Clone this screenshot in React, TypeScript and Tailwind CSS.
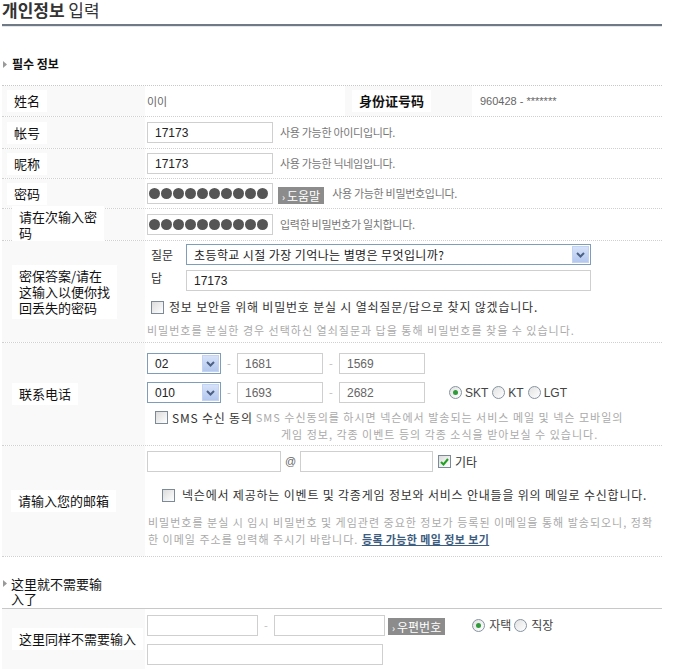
import React from "react";

const KR = "font-['Noto_Sans_CJK_KR',sans-serif]";
const SC = "font-['Noto_Sans_CJK_SC',sans-serif]";
const LAT = "font-['Liberation_Sans',sans-serif]";

function Label({ children, pl = "pl-[5px]", w = "w-[143px]", bold }: { children: React.ReactNode; pl?: string; w?: string; bold?: boolean }) {
  return (
    <div className={`${w} shrink-0 self-stretch flex items-center bg-[#f9f9f9] ${pl}`}>
      <span className={`bg-white px-[7px] py-[3px] text-[13px] leading-[16px] text-[#111] ${bold ? "font-semibold" : ""} ${SC}`}>{children}</span>
    </div>
  );
}

function TextBox({ w, value, dim }: { w: string; value?: string; dim?: boolean }) {
  return (
    <div className={`${w} h-[21px] shrink-0 border border-[#cfcfcf] bg-white flex items-center px-[7px] text-[12px] ${dim ? "text-[#666]" : "text-[#222]"} ${LAT}`}>
      {value}
    </div>
  );
}

function PasswordBox() {
  return (
    <div className="w-[126px] h-[21px] shrink-0 border border-[#cfcfcf] bg-white flex items-center gap-[1px] pl-[1px]">
      {Array.from({ length: 10 }).map((_, i) => (
        <span key={i} className="w-[11px] h-[11px] rounded-full bg-[#555]" />
      ))}
    </div>
  );
}

function SelectBox({ w, value, kr }: { w: string; value: string; kr?: boolean }) {
  return (
    <div className={`${w} h-[21px] shrink-0 border border-[#7f9db9] bg-white flex items-center justify-between pl-[7px] pr-[1px]`}>
      <span className={`text-[12px] text-[#222] ${kr ? `${KR} tracking-[0.4px]` : LAT}`}>{value}</span>
      <span className="w-[17px] h-[17px] bg-gradient-to-b from-[#d6e2f8] to-[#b4c8ee] border border-[#c3d3f3] flex items-center justify-center">
        <svg width="9" height="6" viewBox="0 0 9 6">
          <path d="M1 1l3.5 3.5L8 1" fill="none" stroke="#4d6185" strokeWidth="2" />
        </svg>
      </span>
    </div>
  );
}

function GrayButton({ children }: { children: React.ReactNode }) {
  return (
    <span className={`h-[18px] shrink-0 bg-[#8c8c8c] text-white text-[12px] leading-[18px] px-[4px] ${KR}`}>
      <span className="text-[10px] mr-[2px]">›</span>
      {children}
    </span>
  );
}

function Radio({ on }: { on?: boolean }) {
  return (
    <span className="w-[13px] h-[13px] shrink-0 rounded-full border border-[#8594a2] bg-gradient-to-br from-[#e2e2e2] to-white flex items-center justify-center">
      {on && <span className="w-[5px] h-[5px] rounded-full bg-[#2f9a3c]" />}
    </span>
  );
}

function Check({ on }: { on?: boolean }) {
  return (
    <span className="w-[13px] h-[13px] shrink-0 border border-[#7c8a98] bg-gradient-to-br from-[#dcdcdc] to-white flex items-center justify-center">
      {on && (
        <svg width="9" height="8" viewBox="0 0 9 8">
          <path d="M1 4l2.5 2.5L8 1" fill="none" stroke="#21a121" strokeWidth="2" />
        </svg>
      )}
    </span>
  );
}

function Dash() {
  return <span className="w-[16px] shrink-0 text-center text-[11px] text-[#bbb]">-</span>;
}

function Arrow() {
  return (
    <svg width="4" height="7" viewBox="0 0 4 7" className="shrink-0">
      <path d="M0 0l4 3.5L0 7z" fill="#9a9a9a" />
    </svg>
  );
}

const row = "flex border-b border-dotted border-[#d0d0d0]";
const note = `text-[11px] tracking-[-0.3px] text-[#777] ${KR}`;
const hint = `text-[11px] tracking-[1px] text-[#aaa] ${KR}`;
const body = `text-[12px] tracking-[0.8px] text-[#333] ${KR}`;

export default function App() {
  return (
    <div className={`w-[685px] h-[669px] bg-white overflow-hidden ${KR}`}>
      <div className="ml-[2px] w-[660px]">
        <h1 className="h-[24px] text-[17px] leading-[20px] text-[#333]">
          <span className="font-bold">개인정보</span> 입력
        </h1>
        <div className="h-[2px] bg-[#6f7a86]" />
        <div className="h-[1px] bg-[#e3e6ea]" />

        <div className="h-[59px] pt-[30px] flex items-start gap-[5px] pl-[1px] border-b border-dotted border-[#c8c8c8]">
          <span className="mt-[4px]"><Arrow /></span>
          <span className="text-[12px] leading-[14px] font-bold text-[#111]">필수 정보</span>
        </div>

        {/* 기본 정보 */}
        <div className={`${row} h-[31px]`}>
          <Label>姓名</Label>
          <div className="w-[200px] flex items-center pl-[2px] text-[11px] text-[#666]">이이</div>
          <Label w="w-[127px]" pl="pl-[7px]" bold>身份证号码</Label>
          <div className={`flex items-center pl-[8px] text-[11px] text-[#666] ${LAT}`}>960428 - *******</div>
        </div>

        <div className={`${row} h-[32px]`}>
          <Label>帐号</Label>
          <div className="flex items-center gap-[7px] pl-[2px]">
            <TextBox w="w-[126px]" value="17173" />
            <span className={note}>사용 가능한 아이디입니다.</span>
          </div>
        </div>

        <div className={`${row} h-[30px]`}>
          <Label>昵称</Label>
          <div className="flex items-center gap-[7px] pl-[2px]">
            <TextBox w="w-[126px]" value="17173" />
            <span className={note}>사용 가능한 닉네임입니다.</span>
          </div>
        </div>

        <div className={`${row} h-[30px]`}>
          <Label>密码</Label>
          <div className="flex items-center pl-[2px]">
            <PasswordBox />
            <span className="ml-[5px]"><GrayButton>도움말</GrayButton></span>
            <span className={`${note} ml-[8px]`}>사용 가능한 비밀번호입니다.</span>
          </div>
        </div>

        <div className={`${row} h-[32px]`}>
          <Label pl="pl-[10px]">
            请在次输入密
            <br />
            码
          </Label>
          <div className="flex items-center gap-[7px] pl-[2px]">
            <PasswordBox />
            <span className={note}>입력한 비밀번호가 일치합니다.</span>
          </div>
        </div>

        {/* 열쇠질문 */}
        <div className={`${row} h-[102px]`}>
          <Label pl="pl-[10px]">
            密保答案/请在
            <br />
            这输入以便你找
            <br />
            回丢失的密码
          </Label>
          <div className="flex flex-col pl-[1px] pt-[3px]">
            <div className="flex items-center">
              <span className="w-[40px] pl-[5px] text-[12px] text-[#333]">질문</span>
              <SelectBox w="w-[405px]" value="초등학교 시절 가장 기억나는 별명은 무엇입니까?" kr />
            </div>
            <div className="flex items-start mt-[5px]">
              <span className="w-[40px] pl-[5px] text-[12px] leading-[16px] text-[#333]">답</span>
              <TextBox w="w-[405px]" value="17173" />
            </div>
            <div className="flex items-center gap-[5px] mt-[7px] pl-[5px]">
              <Check />
              <span className={`${body} whitespace-nowrap`}>정보 보안을 위해 비밀번호 분실 시 열쇠질문/답으로 찾지 않겠습니다.</span>
            </div>
            <div className={`${hint} mt-[6px] pl-[1px] whitespace-nowrap`}>비밀번호를 분실한 경우 선택하신 열쇠질문과 답을 통해 비밀번호를 찾을 수 있습니다.</div>
          </div>
        </div>

        {/* 연락처 */}
        <div className={`${row} h-[103px]`}>
          <Label pl="pl-[10px]">联系电话</Label>
          <div className="flex flex-col pl-[2px] pt-[10px]">
            <div className="flex items-center">
              <SelectBox w="w-[74px]" value="02" />
              <Dash />
              <TextBox w="w-[86px]" value="1681" dim />
              <Dash />
              <TextBox w="w-[86px]" value="1569" dim />
            </div>
            <div className="flex items-center mt-[8px]">
              <SelectBox w="w-[74px]" value="010" />
              <Dash />
              <TextBox w="w-[86px]" value="1693" dim />
              <Dash />
              <TextBox w="w-[86px]" value="2682" dim />
              <div className={`flex items-center ml-[24px] text-[12px] text-[#444] ${LAT}`}>
                <Radio on />
                <span className="ml-[3px] mr-[4px]">SKT</span>
                <Radio />
                <span className="ml-[3px] mr-[4px]">KT</span>
                <Radio />
                <span className="ml-[3px]">LGT</span>
              </div>
            </div>
            <div className="flex items-start mt-[6px] pl-[8px]">
              <span className="mt-[2px]"><Check /></span>
              <span className={`ml-[4px] ${body} tracking-[0.3px] leading-[17px] shrink-0`}>SMS 수신 동의</span>
              <div className={`${hint} ml-[3px] leading-[17px] whitespace-nowrap text-center`}>
                SMS 수신동의를 하시면 넥슨에서 발송되는 서비스 메일 및 넥슨 모바일의
                <br />
                게임 정보, 각종 이벤트 등의 각종 소식을 받아보실 수 있습니다.
              </div>
            </div>
          </div>
        </div>

        {/* 이메일 */}
        <div className={`${row} h-[111px]`}>
          <Label pl="pl-[9px]">请输入您的邮箱</Label>
          <div className="flex flex-col pl-[2px] pt-[5px]">
            <div className="flex items-center">
              <TextBox w="w-[134px]" />
              <span className={`w-[19px] text-center text-[11px] text-[#666] ${LAT}`}>@</span>
              <TextBox w="w-[133px]" />
              <span className="ml-[5px]"><Check on /></span>
              <span className="ml-[4px] text-[12px] text-[#333]">기타</span>
            </div>
            <div className="flex items-center mt-[14px] pl-[15px]">
              <Check />
              <span className={`ml-[7px] ${body} whitespace-nowrap`}>
                넥슨에서 제공하는 이벤트 및 각종게임 정보와 서비스 안내들을 위의 메일로 수신합니다.
              </span>
            </div>
            <div className={`${hint} mt-[10px] leading-[17px] whitespace-nowrap pl-[1px]`}>
              비밀번호를 분실 시 임시 비밀번호 및 게임관련 중요한 정보가 등록된 이메일을 통해 발송되오니, 정확
              <br />
              한 이메일 주소를 입력해 주시기 바랍니다.{" "}
              <a className="font-bold text-[#3d5d80] underline tracking-[0.4px]">등록 가능한 메일 정보 보기</a>
            </div>
          </div>
        </div>

        <div className="h-[52px] pt-[19px] flex items-start gap-[4px] pl-[1px] border-b border-[#c8c8c8]">
          <span className="mt-[4px]"><Arrow /></span>
          <span className={`text-[13px] leading-[15px] text-[#111] ${SC}`}>
            这里就不需要输
            <br />
            入了
          </span>
        </div>

        {/* 주소 */}
        <div className="flex h-[60px]">
          <Label pl="pl-[10px]">这里同样不需要输入</Label>
          <div className="flex flex-col pl-[2px] pt-[4px]">
            <div className="flex items-center">
              <TextBox w="w-[111px]" />
              <Dash />
              <TextBox w="w-[111px]" />
              <span className="ml-[3px]"><GrayButton>우편번호</GrayButton></span>
              <div className="flex items-center ml-[27px] text-[12px] text-[#444]">
                <Radio on />
                <span className="ml-[4px] mr-[3px]">자택</span>
                <Radio />
                <span className="ml-[4px]">직장</span>
              </div>
            </div>
            <div className="mt-[7px]">
              <TextBox w="w-[236px]" />
            </div>
          </div>
        </div>
      </div>
    </div>
  );
}
